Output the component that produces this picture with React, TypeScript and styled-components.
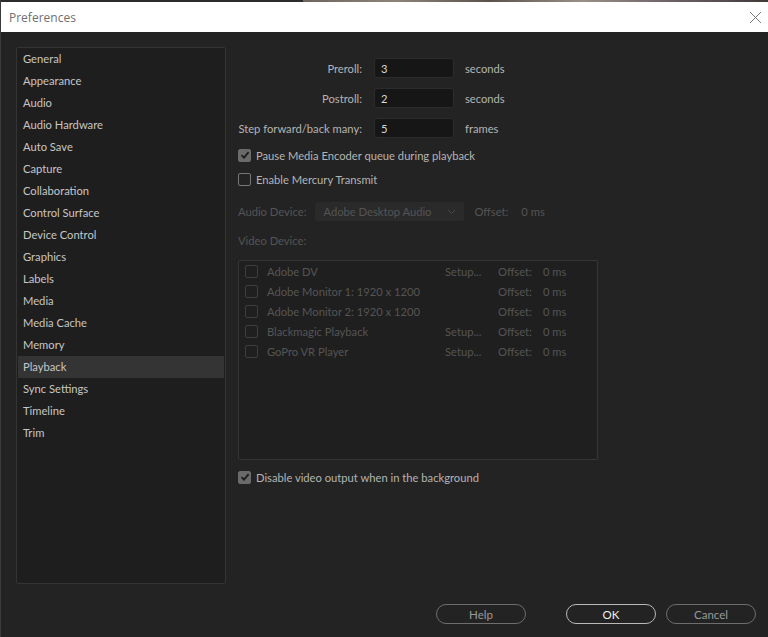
import React from 'react';
import styled, { createGlobalStyle } from 'styled-components';

const GlobalStyle = createGlobalStyle`
  html, body {
    margin: 0;
    padding: 0;
    background: #232323;
  }
  body {
    font-family: Lato, "Open Sans", "Liberation Sans", sans-serif;
    font-size: 11.2px;
  }
`;

const sections = [
  'General',
  'Appearance',
  'Audio',
  'Audio Hardware',
  'Auto Save',
  'Capture',
  'Collaboration',
  'Control Surface',
  'Device Control',
  'Graphics',
  'Labels',
  'Media',
  'Media Cache',
  'Memory',
  'Playback',
  'Sync Settings',
  'Timeline',
  'Trim',
];

const timings = [
  { label: 'Preroll:', value: '3', unit: 'seconds' },
  { label: 'Postroll:', value: '2', unit: 'seconds' },
  { label: 'Step forward/back many:', value: '5', unit: 'frames' },
];

const devices = [
  { name: 'Adobe DV', setup: true },
  { name: 'Adobe Monitor 1: 1920 x 1200', setup: false },
  { name: 'Adobe Monitor 2: 1920 x 1200', setup: false },
  { name: 'Blackmagic Playback', setup: true },
  { name: 'GoPro VR Player', setup: true },
];

const Window = styled.div`
  display: flex;
  flex-direction: column;
  height: 637px;
  background: #232323;
  border-left: 1px solid #3a3a3a;
  box-sizing: border-box;
`;

const TopStrip = styled.div`
  display: flex;
  height: 2px;
  background: #2c2c2c;
`;

const StripPhoto = styled.div`
  margin-left: auto;
  width: 465px;
  background: linear-gradient(
    90deg,
    #6d665f 0%,
    #8d8378 20%,
    #5a524c 40%,
    #9a8f86 60%,
    #6b5f66 80%,
    #3f3a38 100%
  );
`;

const TitleBar = styled.div`
  display: flex;
  align-items: center;
  height: 30px;
  padding: 0 6px 0 8px;
  background: #ffffff;
`;

const Title = styled.span`
  font-family: "Open Sans", "Noto Sans", sans-serif;
  font-size: 12px;
  color: #6f6f6f;
`;

const CloseButton = styled.div`
  margin-left: auto;
  display: flex;
  align-items: center;
  justify-content: center;
  width: 14px;
  height: 14px;
`;

const Main = styled.div`
  display: flex;
  padding: 15px 0 0 15px;
`;

const Sidebar = styled.ul`
  margin: 0;
  padding: 0 1px;
  list-style: none;
  width: 210px;
  height: 537px;
  box-sizing: border-box;
  background: #1e1e1e;
  border: 1px solid #343434;
  border-radius: 2px;
`;

const SidebarItem = styled.li<{ $active?: boolean }>`
  height: 22px;
  line-height: 22px;
  padding-left: 5px;
  color: #c6c6c6;
  background: ${p => (p.$active ? '#343434' : 'transparent')};
`;

const Content = styled.div`
  display: flex;
  flex-direction: column;
  margin-left: 12px;
  padding-top: 11px;
  color: #b4b4b4;
`;

const TimingGrid = styled.div`
  display: grid;
  grid-template-columns: 124px 80px auto;
  column-gap: 12px;
  row-gap: 10px;
  align-items: center;
`;

const FieldLabel = styled.span`
  text-align: right;
  white-space: nowrap;
`;

const Field = styled.div`
  height: 20px;
  line-height: 20px;
  padding-left: 6px;
  box-sizing: border-box;
  background: #161616;
  border: 1px solid #2c2c2c;
  border-radius: 3px;
  color: #d6d6d6;
`;

const Unit = styled.span`
  margin-left: -1px;
`;

const CheckRow = styled.label<{ $top: number }>`
  display: flex;
  align-items: center;
  gap: 5px;
  height: 14px;
  margin-top: ${p => p.$top}px;
  white-space: nowrap;
`;

const Box = styled.span<{ $checked?: boolean; $dim?: boolean }>`
  display: flex;
  align-items: center;
  justify-content: center;
  flex: none;
  width: 13px;
  height: 13px;
  box-sizing: border-box;
  border-radius: 2px;
  border: 1px solid
    ${p => (p.$dim ? '#3e3e3e' : p.$checked ? '#6a6a6a' : '#777777')};
  background: ${p => (p.$checked ? '#6a6a6a' : 'transparent')};
`;

const Check = () => (
  <svg width="10" height="10" viewBox="0 0 10 10">
    <path d="M1.5 5.2 L4 7.6 L8.6 2.2" fill="none" stroke="#1c1c1c" strokeWidth="1.8" />
  </svg>
);

const DeviceRow = styled.div`
  display: flex;
  align-items: center;
  height: 19px;
  margin-top: 16px;
  color: #545454;
  white-space: nowrap;
`;

const Select = styled.div`
  display: flex;
  align-items: center;
  width: 149px;
  height: 19px;
  margin-left: 9px;
  padding: 0 8px;
  box-sizing: border-box;
  background: #2a2a2a;
  border-radius: 2px;
`;

const Chevron = styled.span`
  margin-left: auto;
  display: flex;
`;

const OffsetLabel = styled.span<{ $gap: number }>`
  margin-left: ${p => p.$gap}px;
`;

const SectionLabel = styled.div`
  margin-top: 13px;
  height: 14px;
  line-height: 14px;
  color: #545454;
`;

const DeviceList = styled.div`
  margin-top: 12px;
  width: 360px;
  height: 200px;
  box-sizing: border-box;
  padding: 0 0 0 6px;
  border: 1px solid #363636;
  border-radius: 2px;
  background: #1f1f1f;
`;

const DeviceItem = styled.div`
  display: grid;
  grid-template-columns: 13px 187px 53px 45px auto;
  align-items: center;
  height: 20px;
  color: #555555;
  white-space: nowrap;
  & > span:nth-child(2) {
    margin-left: 9px;
  }
`;

const Footer = styled.div`
  display: flex;
  justify-content: flex-end;
  margin-top: 20px;
  padding-right: 12px;
`;

const Pill = styled.button<{ $primary?: boolean; $gap: number }>`
  width: 90px;
  height: 20px;
  margin-left: ${p => p.$gap}px;
  padding: 0;
  border-radius: 10px;
  background: transparent;
  border: 1px solid ${p => (p.$primary ? '#b9b9b9' : '#6e6e6e')};
  color: ${p => (p.$primary ? '#f0f0f0' : '#9a9a9a')};
  font-family: Lato, "Open Sans", sans-serif;
  font-size: 11.5px;
`;

export default function App() {
  return (
    <>
      <GlobalStyle />
      <Window>
        <TopStrip>
          <StripPhoto />
        </TopStrip>
        <TitleBar>
          <Title>Preferences</Title>
          <CloseButton>
            <svg width="13" height="13" viewBox="0 0 13 13">
              <path d="M1 1 L12 12 M12 1 L1 12" stroke="#7a7a7a" strokeWidth="1" />
            </svg>
          </CloseButton>
        </TitleBar>
        <Main>
          <Sidebar>
            {sections.map(s => (
              <SidebarItem key={s} $active={s === 'Playback'}>
                {s}
              </SidebarItem>
            ))}
          </Sidebar>
          <Content>
            <TimingGrid>
              {timings.map(t => (
                <React.Fragment key={t.label}>
                  <FieldLabel>{t.label}</FieldLabel>
                  <Field>{t.value}</Field>
                  <Unit>{t.unit}</Unit>
                </React.Fragment>
              ))}
            </TimingGrid>
            <CheckRow $top={10}>
              <Box $checked>
                <Check />
              </Box>
              Pause Media Encoder queue during playback
            </CheckRow>
            <CheckRow $top={10}>
              <Box />
              Enable Mercury Transmit
            </CheckRow>
            <DeviceRow>
              <span>Audio Device:</span>
              <Select>
                Adobe Desktop Audio
                <Chevron>
                  <svg width="9" height="6" viewBox="0 0 9 6">
                    <path d="M1 1 L4.5 4.5 L8 1" fill="none" stroke="#4a4a4a" strokeWidth="1" />
                  </svg>
                </Chevron>
              </Select>
              <OffsetLabel $gap={10}>Offset:</OffsetLabel>
              <OffsetLabel $gap={13}>0 ms</OffsetLabel>
            </DeviceRow>
            <SectionLabel>Video Device:</SectionLabel>
            <DeviceList>
              {devices.map(d => (
                <DeviceItem key={d.name}>
                  <Box $dim />
                  <span>{d.name}</span>
                  <span>{d.setup ? 'Setup...' : ''}</span>
                  <span>Offset:</span>
                  <span>0 ms</span>
                </DeviceItem>
              ))}
            </DeviceList>
            <CheckRow $top={10}>
              <Box $checked>
                <Check />
              </Box>
              Disable video output when in the background
            </CheckRow>
          </Content>
        </Main>
        <Footer>
          <Pill $gap={0}>Help</Pill>
          <Pill $primary $gap={40}>OK</Pill>
          <Pill $gap={10}>Cancel</Pill>
        </Footer>
      </Window>
    </>
  );
}
